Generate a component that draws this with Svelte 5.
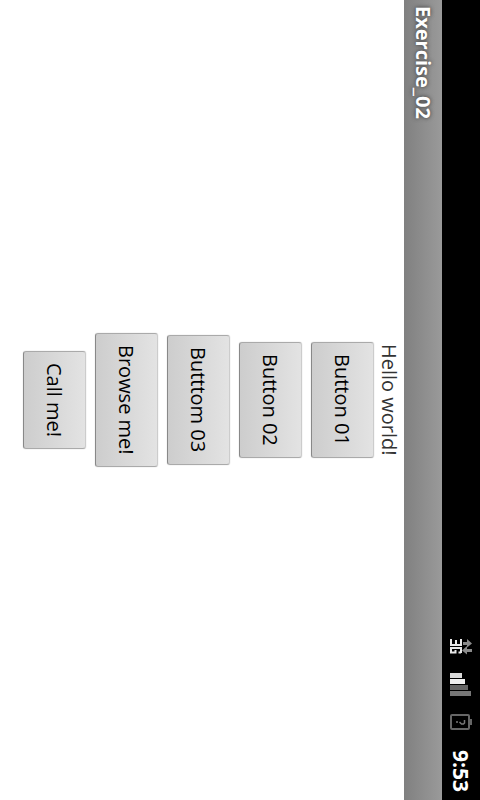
<script>
  const buttons = ['Button 01', 'Button 02', 'Butttom 03', 'Browse me!', 'Call me!'];
</script>

<div class="screen">
  <header class="status">
    <svg class="network" width="22" height="16" viewBox="0 0 22 16" role="img" aria-label="3G network">
      <g fill="none" stroke="#e8e8e8" stroke-width="2">
        <path d="M1 0v6h10V0M6 1v5" />
        <path d="M1 14V9h10v5M0 13.500h5.500V11M11 13.500H8.500" />
      </g>
      <path fill="#8b8b8b" d="M13 3h4V0l5 4.500-5 4V6h-4zM22 10h-5V7l-5 4.500 5 4V13h5z" />
    </svg>
    <svg class="signal" width="22" height="24" viewBox="0 0 22 24" role="img" aria-label="Signal strength">
      <path fill="#dadada" d="M0 1h12v5H0z" />
      <path fill="#f0f0f0" d="M0 7h15v5H0z" />
      <path fill="#656565" d="M0 13h18v5H0z" />
      <path fill="#777" d="M0 19h21v5H0z" />
    </svg>
    <svg class="battery" width="22" height="16" viewBox="0 0 22 16" role="img" aria-label="Battery unknown">
      <rect x="1" y="1" width="18" height="14" rx="1" fill="none" stroke="#666" stroke-width="2" />
      <path fill="#666" d="M20 5h2v6h-2z" />
      <path fill="none" stroke="#777" stroke-width="1.5" d="M6 8h2M9.500 8l2 2h2l1-1V6" />
    </svg>
    <time>9:53</time>
  </header>

  <h1>Exercise_02</h1>

  <main>
    <p>Hello world!</p>
    {#each buttons as label}
      <button type="button">{label}</button>
    {/each}
  </main>
</div>

<style>
  :global(body) {
    margin: 0;
    background: #fff;
  }

  .screen {
    writing-mode: vertical-rl;
    display: flex;
    flex-direction: column;
    width: 100%;
    height: 100vh;
    font-family: "Open Sans", "Noto Sans", sans-serif;
    font-size: 20px;
    line-height: 28px;
    white-space: nowrap;
  }

  .status {
    display: flex;
    align-items: center;
    justify-content: flex-end;
    width: 38px;
    box-sizing: border-box;
    padding-bottom: 8px;
    background: #000;
    color: #fff;
  }

  svg {
    display: block;
    flex: none;
  }

  .network {
    margin-bottom: 17px;
  }

  .signal {
    margin-bottom: 18px;
  }

  .battery {
    margin-bottom: 20px;
  }

  time {
    font-size: 21px;
    font-weight: 700;
  }

  h1 {
    width: 38px;
    box-sizing: border-box;
    margin: 0;
    padding: 6px 0;
    background: linear-gradient(to right, #808080, #9a9a9a);
    color: #fff;
    font-size: 20px;
    font-weight: 700;
    line-height: 38px;
    text-shadow: 0 0 4px #333;
  }

  main {
    display: flex;
    flex-direction: column;
    align-items: center;
    color: #333;
  }

  p {
    margin: 0 1px;
  }

  button {
    writing-mode: inherit;
    width: 63px;
    box-sizing: border-box;
    margin: 0 0 0 9px;
    padding: 11px 2px 11px 0;
    border: 1px solid #aaa;
    border-left-color: #888;
    border-right-color: #ccc;
    border-radius: 3px;
    background: linear-gradient(to right, #cdcdcd, #e3e3e3);
    box-shadow: 0 0 1px #aaa;
    color: #000;
    font: inherit;
  }
</style>
